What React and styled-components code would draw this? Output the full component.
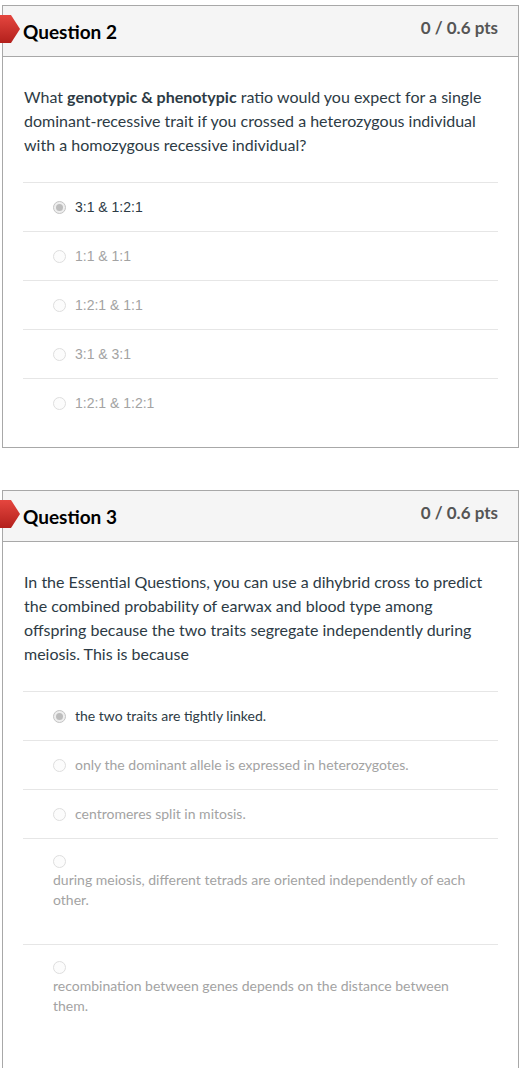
import React from "react";
import styled, { createGlobalStyle } from "styled-components";

const GlobalStyle = createGlobalStyle`
  html, body {
    margin: 0;
    padding: 0;
    background: #fff;
  }
  body {
    font-family: Lato, "Noto Sans", sans-serif;
    color: #2d3b45;
  }
`;

const Page = styled.div`
  padding: 5px 4px 0 2px;
  display: flex;
  flex-direction: column;
  gap: 42px;
`;

const Card = styled.div`
  position: relative;
  border: 1px solid #a8a8a8;
  background: #fff;
`;

const Header = styled.div`
  height: 50px;
  background: #f5f5f5;
  border-bottom: 1px solid #a8a8a8;
  display: flex;
  align-items: center;
  justify-content: space-between;
  padding: 0 20px 0 20px;
`;

const Title = styled.h2`
  margin: 1px 0 0 0;
  font-size: 19px;
  font-weight: 700;
  color: #000;
`;

const Points = styled.div`
  margin-bottom: 7px;
  font-size: 17px;
  font-weight: 700;
  color: #555;
`;

const Flag = styled.svg`
  position: absolute;
  left: -3px;
  top: 9px;
`;

const Body = styled.div`
  padding: 28px 20px 20px 20px;
`;

const QuestionText = styled.p`
  margin: 0 0 25px 1px;
  font-size: 16px;
  line-height: 24px;
  color: #2d3b45;

  b {
    font-weight: 700;
  }
`;

const Answers = styled.div`
  display: flex;
  flex-direction: column;
`;

const Row = styled.div`
  border-top: 1px solid #e6e6e6;
  padding: ${(p) => (p.$stacked ? "16px 0 34px 30px" : "14px 0 14px 30px")};
  display: ${(p) => (p.$stacked ? "block" : "flex")};
  align-items: center;
  gap: 9px;
`;

const Radio = styled.span`
  box-sizing: border-box;
  display: ${(p) => (p.$stacked ? "block" : "inline-block")};
  flex: none;
  width: 13px;
  height: 13px;
  border-radius: 50%;
  border: 1px solid ${(p) => (p.$checked ? "#c4c4c4" : "#dedede")};
  background: ${(p) => (p.$checked ? "#eeeeee" : "#fcfcfc")};
  margin-bottom: ${(p) => (p.$stacked ? "2px" : "0")};
  position: relative;

  &::after {
    content: "";
    display: ${(p) => (p.$checked ? "block" : "none")};
    position: absolute;
    left: 2px;
    top: 2px;
    width: 7px;
    height: 7px;
    border-radius: 50%;
    background: #bdbdbd;
  }
`;

const Label = styled.span`
  font-family: ${(p) =>
    p.$arial ? '"Liberation Sans", Arial, sans-serif' : 'Lato, "Noto Sans", sans-serif'};
  font-size: 14px;
  line-height: 20px;
  color: ${(p) => (p.$checked ? "#2d3b45" : "#a3a3a3")};
  display: block;
  padding-right: 20px;
`;

const IncorrectFlag = () => (
  <Flag width="20" height="28" viewBox="0 0 20 28">
    <defs>
      <linearGradient id="flagGrad" x1="0" y1="0" x2="0" y2="1">
        <stop offset="0" stopColor="#e5463f" />
        <stop offset="1" stopColor="#b3201c" />
      </linearGradient>
    </defs>
    <path d="M0 0 H11 L20 14 L11 28 H0 Z" fill="url(#flagGrad)" />
  </Flag>
);

const questions = [
  {
    title: "Question 2",
    points: "0 / 0.6 pts",
    text: (
      <>
        What <b>genotypic &amp; phenotypic</b> ratio would you expect for a single
        dominant-recessive trait if you crossed a heterozygous individual with a
        homozygous recessive individual?
      </>
    ),
    arial: true,
    answers: [
      { label: "3:1 & 1:2:1", checked: true },
      { label: "1:1 & 1:1" },
      { label: "1:2:1 & 1:1" },
      { label: "3:1 & 3:1" },
      { label: "1:2:1 & 1:2:1" },
    ],
  },
  {
    title: "Question 3",
    points: "0 / 0.6 pts",
    text: (
      <>
        In the Essential Questions, you can use a dihybrid cross to predict the
        combined probability of earwax and blood type among offspring because the
        two traits segregate independently during meiosis. This is because
      </>
    ),
    answers: [
      { label: "the two traits are tightly linked.", checked: true },
      { label: "only the dominant allele is expressed in heterozygotes." },
      { label: "centromeres split in mitosis." },
      {
        label: "during meiosis, different tetrads are oriented independently of each other.",
        stacked: true,
      },
      {
        label: "recombination between genes depends on the distance between them.",
        stacked: true,
      },
    ],
  },
];

const Question = ({ q }) => (
  <Card>
    <IncorrectFlag />
    <Header>
      <Title>{q.title}</Title>
      <Points>{q.points}</Points>
    </Header>
    <Body>
      <QuestionText>{q.text}</QuestionText>
      <Answers>
        {q.answers.map((a) => (
          <Row key={a.label} $stacked={a.stacked}>
            <Radio $checked={a.checked} $stacked={a.stacked} />
            <Label $checked={a.checked} $arial={q.arial}>
              {a.label}
            </Label>
          </Row>
        ))}
      </Answers>
    </Body>
  </Card>
);

export default function App() {
  return (
    <>
      <GlobalStyle />
      <Page>
        {questions.map((q) => (
          <Question key={q.title} q={q} />
        ))}
      </Page>
    </>
  );
}
